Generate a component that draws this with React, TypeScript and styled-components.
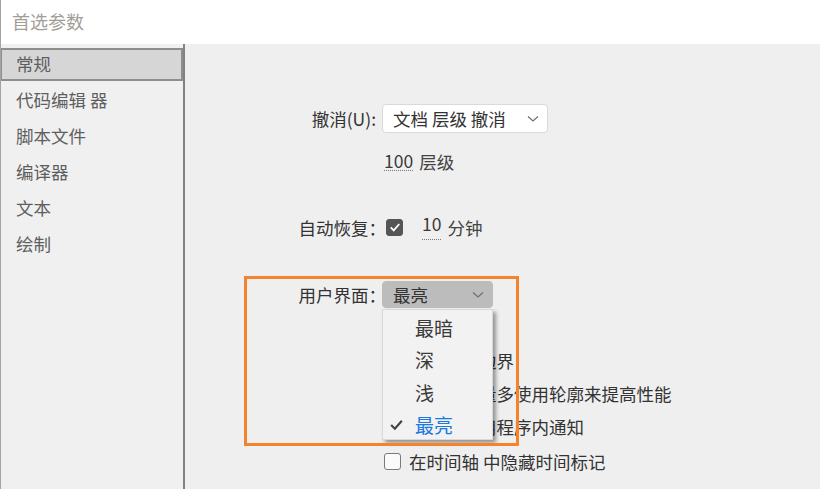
import React from "react";
import styled, { createGlobalStyle } from "styled-components";

const GlobalStyle = createGlobalStyle`
  html, body {
    margin: 0;
    padding: 0;
    background: #efefef;
  }
  body {
    font-family: "Noto Sans CJK SC", "Noto Sans", sans-serif;
    font-size: 17.5px;
    color: #333;
  }
`;

const Window = styled.div`
  width: 820px;
  height: 489px;
  display: flex;
  flex-direction: column;
  border-left: 1px solid #a3a3a3;
  box-sizing: border-box;
  overflow: hidden;
`;

const TitleBar = styled.div`
  height: 44px;
  flex: none;
  background: #ffffff;
  display: flex;
  align-items: center;
  padding-left: 11px;
  padding-bottom: 3px;
  box-sizing: border-box;
  font-size: 18px;
  color: #a39d97;
`;

const Body = styled.div`
  flex: 1;
  display: flex;
  min-height: 0;
`;

const Sidebar = styled.ul`
  width: 182px;
  flex: none;
  margin: 0;
  padding: 4px 0 0;
  list-style: none;
  background: #f0f0f0;
  border-right: 2px solid #828282;
`;

const NavItem = styled.li<{ $active?: boolean }>`
  height: 33px;
  margin-bottom: 3px;
  display: flex;
  align-items: center;
  padding-left: 14px;
  padding-bottom: 2px;
  box-sizing: border-box;
  border: 2px solid ${(p) => (p.$active ? "#8e8e8e" : "transparent")};
  border-left-width: 1px;
  background: ${(p) => (p.$active ? "#d6d6d6" : "transparent")};
  color: #5e5e5e;
`;

const Main = styled.div`
  flex: 1;
  position: relative;
  background: #efefef;
  padding-top: 60px;
`;

const FormRow = styled.div<{ $top: number; $height: number }>`
  display: flex;
  align-items: center;
  gap: 6px;
  margin-top: ${(p) => p.$top}px;
  height: ${(p) => p.$height}px;
`;

const Label = styled.div`
  width: 191px;
  text-align: right;
  color: #333;
  white-space: nowrap;
`;

/* full-width colon sits left in its cell; pull it over so it ends near the control */
const Colon = styled.span`
  margin-right: -10px;
`;

const SubRow = styled.div<{ $top: number }>`
  display: flex;
  align-items: center;
  gap: 6px;
  margin-top: ${(p) => p.$top}px;
  height: 22px;
  padding-left: 199px;
  color: #444;
`;

const Number = styled.span`
  color: #3a3a3a;
  border-bottom: 1px dotted #7a7a7a;
  line-height: 18px;
`;

const SelectBox = styled.div<{ $width: number; $height: number; $filled?: boolean }>`
  position: relative;
  width: ${(p) => p.$width}px;
  height: ${(p) => p.$height}px;
  box-sizing: border-box;
  display: flex;
  align-items: center;
  justify-content: space-between;
  padding: 0 8px 0 10px;
  border-radius: 4px;
  border: 1px solid ${(p) => (p.$filled ? "#bcbcbc" : "#dadada")};
  background: ${(p) => (p.$filled ? "#bcbcbc" : "#ffffff")};
  color: #333;
`;

const Chevron = () => (
  <svg width="12" height="8" viewBox="0 0 12 8">
    <polyline points="1,1.5 6,6 11,1.5" fill="none" stroke="#6f6f6f" strokeWidth="1.2" />
  </svg>
);

const CheckBox = styled.span<{ $checked?: boolean }>`
  width: 17px;
  height: 17px;
  flex: none;
  box-sizing: border-box;
  border-radius: 3px;
  display: inline-flex;
  align-items: center;
  justify-content: center;
  border: 1px solid ${(p) => (p.$checked ? "#555" : "#7a7a7a")};
  background: ${(p) => (p.$checked ? "#555" : "#fafafa")};
`;

const AutoBox = styled.div`
  display: flex;
  align-items: center;
  gap: 6px;
  margin-left: 4px;
`;

const Minutes = styled.span`
  margin-left: 13px;
  display: inline-flex;
  gap: 6px;
  color: #444;
`;

const CheckRow = styled.div<{ $extra?: number }>`
  display: flex;
  align-items: center;
  gap: 8px;
  height: 33px;
  margin-top: ${(p) => p.$extra ?? 0}px;
  padding-left: 199px;
  color: #333;
  white-space: nowrap;
`;

const Menu = styled.ul`
  position: absolute;
  left: -1px;
  top: calc(100% + 2px);
  width: 111px;
  margin: 0;
  padding: 1px 0 0;
  list-style: none;
  box-sizing: border-box;
  height: 131px;
  background: #f2f2f2;
  border: 1px solid #d9d9d9;
  box-shadow: 3px 3px 4px rgba(0, 0, 0, 0.38);
  z-index: 2;
`;

const MenuItem = styled.li<{ $selected?: boolean }>`
  height: 32.5px;
  display: flex;
  align-items: center;
  padding-left: 6px;
  color: ${(p) => (p.$selected ? "#1a78e0" : "#3a3a3a")};
  font-size: 19px;
`;

const CheckSlot = styled.span`
  width: 26px;
  display: inline-flex;
  align-items: center;
`;

const Highlight = styled.div`
  position: absolute;
  left: 59px;
  top: 232px;
  width: 275px;
  height: 170px;
  box-sizing: border-box;
  border: 3px solid #f5832c;
  pointer-events: none;
  z-index: 3;
`;

const Tick = ({ color, size }: { color: string; size: number }) => (
  <svg width={size} height={size} viewBox="0 0 14 14">
    <polyline points="2,7.5 5.5,11 12,3.5" fill="none" stroke={color} strokeWidth="2" />
  </svg>
);

const navItems = ["常规", "代码编辑 器", "脚本文件", "编译器", "文本", "绘制"];
const themes = ["最暗", "深", "浅", "最亮"];
const options = [
  { text: "启用阴影", extra: 3 },
  { text: "显示舞台边界", extra: 0 },
  { text: "平移时尽量多使用轮廓来提高性能", extra: 0 },
  { text: "接收各应用程序内通知", extra: 0 },
  { text: "在时间轴 中隐藏时间标记", extra: 2 },
];

export default function App() {
  return (
    <>
      <GlobalStyle />
      <Window>
        <TitleBar>首选参数</TitleBar>
        <Body>
          <Sidebar>
            {navItems.map((item, i) => (
              <NavItem key={item} $active={i === 0}>
                {item}
              </NavItem>
            ))}
          </Sidebar>
          <Main>
            <FormRow $top={0} $height={29}>
              <Label>撤消(U):</Label>
              <SelectBox $width={166} $height={29}>
                <span>文档 层级 撤消</span>
                <Chevron />
              </SelectBox>
            </FormRow>
            <SubRow $top={17}>
              <Number>100</Number>
              <span>层级</span>
            </SubRow>
            <FormRow $top={44} $height={22}>
              <Label>
                自动恢复<Colon>：</Colon>
              </Label>
              <AutoBox>
                <CheckBox $checked>
                  <Tick color="#ffffff" size={12} />
                </CheckBox>
                <Minutes>
                  <Number>10</Number>
                  <span>分钟</span>
                </Minutes>
              </AutoBox>
            </FormRow>
            <FormRow $top={43} $height={27}>
              <Label>
                用户界面<Colon>：</Colon>
              </Label>
              <SelectBox $width={111} $height={27} $filled>
                <span>最亮</span>
                <Chevron />
                <Menu>
                  {themes.map((t) => (
                    <MenuItem key={t} $selected={t === "最亮"}>
                      <CheckSlot>{t === "最亮" && <Tick color="#444" size={15} />}</CheckSlot>
                      {t}
                    </MenuItem>
                  ))}
                </Menu>
              </SelectBox>
            </FormRow>
            {options.map((o) => (
              <CheckRow key={o.text} $extra={o.extra}>
                <CheckBox />
                <span>{o.text}</span>
              </CheckRow>
            ))}
            <Highlight />
          </Main>
        </Body>
      </Window>
    </>
  );
}
